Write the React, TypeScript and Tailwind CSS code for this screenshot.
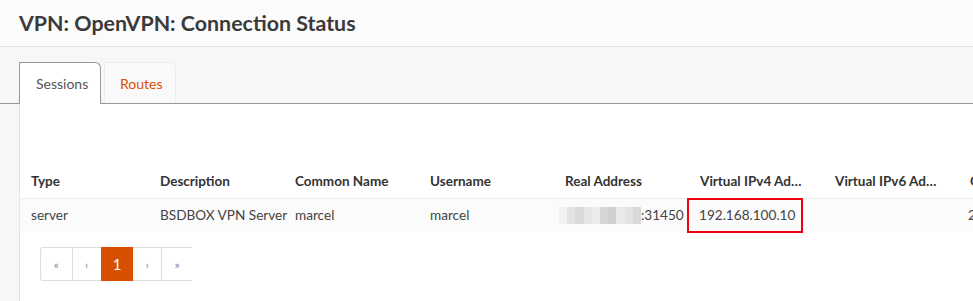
const cols = [
  { label: 'Type', w: 'w-[129px]' },
  { label: 'Description', w: 'w-[135px]' },
  { label: 'Common Name', w: 'w-[135px]' },
  { label: 'Username', w: 'w-[135px]' },
  { label: 'Real Address', w: 'w-[135px]' },
  { label: 'Virtual IPv4 Ad…', w: 'w-[135px]' },
  { label: 'Virtual IPv6 Ad…', w: 'w-[135px]' },
  { label: 'Connected Since', w: 'w-[135px]' },
];

const blur = ['#f1f1f1', '#e2e2e2', '#dadada', '#e6e6e6', '#ececec', '#d6d6d6', '#cfcfcf', '#e9e9e9', '#e4e4e4', '#d9d9d9'];

function Pager() {
  const btn = 'w-[29px] h-[33px] flex items-center justify-center text-[12px] text-[#8a8a9a] border-l border-[#ddd]';
  return (
    <div className="flex h-[34px] w-[152px] border-y border-l border-[#ddd] rounded-l-[3px] bg-white">
      <div className="w-[31px] h-[33px] flex items-center justify-center text-[12px] text-[#8a8a9a]">«</div>
      <div className={btn}>‹</div>
      <div className="w-[33px] h-[34px] -mt-px flex items-center justify-center text-[15px] text-white bg-[#d94f00]">1</div>
      <div className="w-[28px] h-[33px] flex items-center justify-center text-[12px] text-[#8a8a9a]">›</div>
      <div className={btn + ' w-[31px]'}>»</div>
    </div>
  );
}

export default function App() {
  return (
    <div className="w-[973px] h-[301px] overflow-hidden bg-[#f7f7f7] flex flex-col text-[#333]" style={{ fontFamily: 'Lato, "Noto Sans", sans-serif' }}>
      <div className="h-[47px] shrink-0 bg-[#fbfbfb] border-b border-[#e6e6e6] flex items-center px-[19px]">
        <h1 className="text-[21.4px] font-bold text-[#3a3a3a]">VPN: OpenVPN: Connection Status</h1>
      </div>

      <div className="pt-[15px] pl-[19px] flex items-end border-b border-[#999]">
        <div className="w-[82px] h-[42px] -mb-px bg-white border-l border-t border-r border-[#999] rounded-tr-[6px] flex items-center pl-[16px] text-[14px] text-[#555]">
          Sessions
        </div>
        <div className="ml-[3px] w-[72px] h-[41px] bg-[#f9f9f9] border-l border-t border-r border-[#ececec] rounded-tr-[6px] flex items-center pl-[15px] text-[14px] text-[#d94f00]">
          Routes
        </div>
      </div>

      <div className="ml-[19px] flex-1 bg-white border-l border-[#e5e5e5] pt-[61px]">
        <div className="flex h-[34px] items-center border-b border-[#eee] text-[13.5px] font-bold text-[#333] whitespace-nowrap">
          {cols.map((c) => (
            <div key={c.label} className={`${c.w} shrink-0 pl-[11px] overflow-hidden`}>{c.label}</div>
          ))}
        </div>
        <div className="flex h-[33px] items-center bg-[#fbfbfb] text-[13.6px] text-[#444] whitespace-nowrap">
          <div className="w-[129px] shrink-0 pl-[11px]">server</div>
          <div className="w-[135px] shrink-0 pl-[11px]">BSDBOX VPN Server</div>
          <div className="w-[135px] shrink-0 pl-[11px]">marcel</div>
          <div className="w-[135px] shrink-0 pl-[11px]">marcel</div>
          <div className="w-[135px] shrink-0 pl-[5px] flex items-center">
            <div className="flex h-[17px]">
              {blur.map((b, i) => (
                <span key={i} className="w-[8.2px] h-full" style={{ backgroundColor: b }} />
              ))}
            </div>
            <span>:31450</span>
          </div>
          <div className="w-[135px] shrink-0 h-full flex items-center">
            <div className="w-[116px] h-[35px] -ml-[2px] -mt-px border-[2.5px] border-[#ee0010] flex items-center pl-[10px]">192.168.100.10</div>
          </div>
          <div className="w-[135px] shrink-0 pl-[11px]"></div>
          <div className="w-[135px] shrink-0 pl-[9px]">2025-01-01</div>
        </div>
        <div className="pl-[20px] pt-[15px]">
          <Pager />
        </div>
      </div>
    </div>
  );
}
